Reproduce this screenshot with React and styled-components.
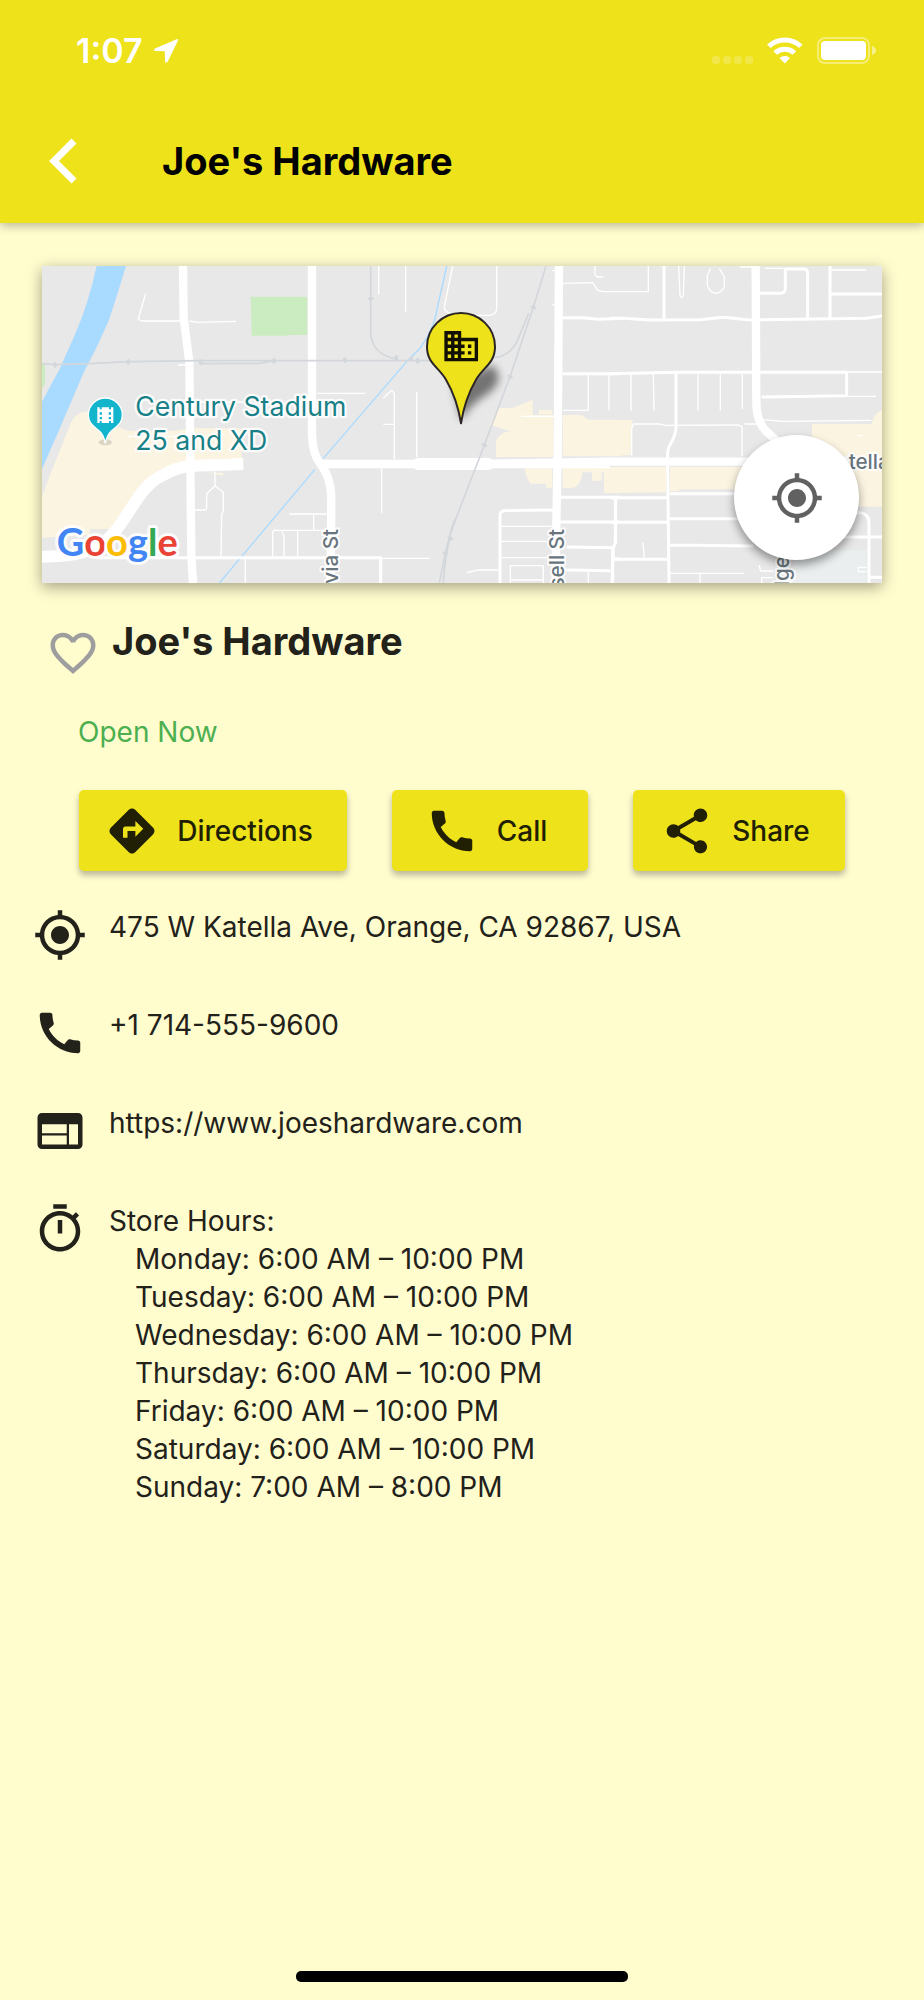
import React from "react";
import styled, { createGlobalStyle } from "styled-components";
import {
  MdCall,
  MdDirections,
  MdFavoriteBorder,
  MdGpsFixed,
  MdShare,
  MdWeb,
} from "react-icons/md";

const GlobalStyle = createGlobalStyle`
  * { box-sizing: border-box; }
  body {
    margin: 0;
    background: #fffcce;
    color: #22211a;
    font-family: Inter, "Liberation Sans", sans-serif;
    font-size: 28px;
    line-height: 38px;
  }
  h1, h2, p, ul { margin: 0; padding: 0; }
  button { font: inherit; color: inherit; cursor: pointer; }
`;

const Screen = styled.div`
  display: flex;
  flex-direction: column;
  min-height: 100vh;
`;

const Header = styled.header`
  position: relative;
  background: #eee21a;
  box-shadow: 0 2px 10px rgba(0, 0, 0, 0.3);
`;

const StatusBar = styled.div`
  display: flex;
  align-items: center;
  justify-content: space-between;
  height: 101px;
  padding: 0 48px 0 76px;
  color: #fff;
`;

const StatusGroup = styled.div`
  display: flex;
  align-items: center;
  gap: ${(p) => p.$gap}px;
`;

const Clock = styled.time`
  font-size: 34px;
  font-weight: 600;
`;

const TitleBar = styled.div`
  display: flex;
  align-items: center;
  gap: 60px;
  height: 122px;
  padding: 0 48px 2px;
`;

const IconButton = styled.button`
  display: flex;
  flex: none;
  padding: 0;
  border: 0;
  background: none;
  color: ${(p) => p.$color};
`;

const BarTitle = styled.h1`
  color: #000;
  font-size: 38px;
  font-weight: 700;
  line-height: 54px;
`;

const Main = styled.main`
  flex: 1;
  padding: 43px 42px 0;
`;

const MapCard = styled.section`
  position: relative;
  height: 317px;
  background: #e8e8e8;
  box-shadow: 0 4px 14px rgba(0, 0, 0, 0.36);
`;

const MapDrawing = styled.svg`
  display: block;
  width: 100%;
  height: 100%;
  font-family: Inter, "Liberation Sans", sans-serif;

  text {
    paint-order: stroke;
    stroke: rgba(255, 255, 255, 0.85);
    stroke-linejoin: round;
  }
`;

const LocateButton = styled.button`
  position: absolute;
  right: 23px;
  bottom: 23px;
  display: flex;
  align-items: center;
  justify-content: center;
  width: 125px;
  height: 125px;
  border: 0;
  border-radius: 50%;
  background: #fff;
  color: #616161;
  box-shadow: 0 5px 10px rgba(0, 0, 0, 0.4);
`;

const NameRow = styled.div`
  display: flex;
  align-items: flex-end;
  gap: 12px;
  height: 66px;
  margin-top: 31px;
  padding-left: 4px;
`;

const Name = styled.h2`
  align-self: flex-start;
  font-size: 38px;
  font-weight: 700;
  line-height: 54px;
`;

const OpenState = styled.p`
  margin-top: 33px;
  padding-left: 36px;
  color: #4caf50;
`;

const Actions = styled.div`
  display: flex;
  flex-wrap: wrap;
  gap: 45px;
  margin-top: 39px;
  padding-left: 37px;
`;

const ActionButton = styled.button`
  display: flex;
  align-items: center;
  justify-content: center;
  gap: 18px;
  min-width: ${(p) => p.$minWidth}px;
  height: 81px;
  padding: 0 8px 0 0;
  border: 0;
  border-radius: 5px;
  background: #eee21a;
  color: #211f04;
  font-weight: 500;
  box-shadow: 0 4px 6px rgba(0, 0, 0, 0.28);
`;

const InfoList = styled.ul`
  margin: 37px -9px 0;
  list-style: none;
`;

const InfoRow = styled.li`
  display: flex;
  align-items: flex-start;
  gap: 22px;
  min-height: 98px;

  svg { flex: none; }
`;

const InfoLink = styled.a`
  color: inherit;
  text-decoration: none;
`;

const Hours = styled.ul`
  padding-left: 26px;
  list-style: none;
`;

const HomeIndicator = styled.div`
  width: 36%;
  height: 11px;
  margin: 40px auto 18px;
  border-radius: 5px;
  background: #000;
`;

const hours = [
  ["Monday", "6:00 AM – 10:00 PM"],
  ["Tuesday", "6:00 AM – 10:00 PM"],
  ["Wednesday", "6:00 AM – 10:00 PM"],
  ["Thursday", "6:00 AM – 10:00 PM"],
  ["Friday", "6:00 AM – 10:00 PM"],
  ["Saturday", "6:00 AM – 10:00 PM"],
  ["Sunday", "7:00 AM – 8:00 PM"],
];

const actions = [
  { label: "Directions", Icon: MdDirections, minWidth: 268 },
  { label: "Call", Icon: MdCall, minWidth: 196 },
  { label: "Share", Icon: MdShare, minWidth: 212 },
];

function BackIcon() {
  return (
    <svg width="54" height="54" viewBox="0 0 54 54" aria-hidden="true">
      <path d="M26 7 6 27l20 20" fill="none" stroke="currentColor" strokeWidth="7" />
    </svg>
  );
}

function TimerIcon() {
  return (
    <svg width="54" height="54" viewBox="0 0 24 24" fill="currentColor" aria-hidden="true">
      <path d="M15 1H9v2h6V1zm-4 13h2V8h-2v6zm8.03-6.61l1.42-1.42c-.43-.51-.9-.99-1.41-1.41l-1.42 1.42C16.07 4.74 14.12 4 12 4c-4.97 0-9 4.03-9 9s4.02 9 9 9 9-4.03 9-9c0-2.12-.74-4.07-1.97-5.61zM12 20c-3.87 0-7-3.13-7-7s3.13-7 7-7 7 3.13 7 7-3.13 7-7 7z" />
    </svg>
  );
}

function LocationArrow() {
  return (
    <svg width="26" height="26" viewBox="0 0 26 26" aria-hidden="true">
      <path
        d="M23.6 1.2 2 10.4c-1.6.7-1.2 2.5.4 2.6l9.400.2.2 9.800c.1 1.800 2 2.100 2.800.5L24.900 2.800c.5-1.100-.2-2-1.300-1.600Z"
        fill="currentColor"
      />
    </svg>
  );
}

function StatusIcons() {
  return (
    <svg width="165" height="28" viewBox="0 0 165 28" fill="#fff" aria-hidden="true">
      <g opacity="0.2">
        {[0, 11, 22, 33].map((x) => (
          <rect key={x} x={x + 1} y="19" width="8" height="8" rx="3" />
        ))}
      </g>
      <path d="M56 7.500a26 26 0 0 1 35.600 0l-3.600 3.600a21 21 0 0 0-28.400 0z" />
      <path d="M62.300 14.200a17 17 0 0 1 23 0l-3.700 3.600a11.500 11.500 0 0 0-15.600 0z" />
      <path d="M68.500 21a8 8 0 0 1 10.600 0L73.800 26.500z" />
      <rect x="107" y="1" width="51" height="25" rx="7" fill="none" stroke="#fff" strokeWidth="2" opacity="0.4" />
      <rect x="110" y="4" width="45" height="19" rx="4" />
      <path d="M161 9q4 1.500 4 4.500t-4 4.500z" opacity="0.5" />
    </svg>
  );
}

const RailTicks = ({ points }) =>
  points.map(([x, y, a = 0]) => (
    <path key={`${x}-${y}`} transform={`translate(${x} ${y}) rotate(${a})`} d="M0-9V9M-3-6V6M3-6V6" strokeWidth="4" />
  ));

function StoreMap() {
  return (
    <MapDrawing viewBox="36 33 2520 951" preserveAspectRatio="xMidYMid slice" role="img" aria-label="Map around Joe's Hardware">
      <defs>
        <filter id="soft" x="-50%" y="-50%" width="200%" height="200%">
          <feGaussianBlur stdDeviation="12" />
        </filter>
      </defs>

      <g fill="#fbf4e1">
        <path d="M36 724 60 660 120 510Q135 470 170 470L290 527H430L500 520H635V612L490 615 400 640Q340 680 300 750 260 800 240 822H180V840L36 848zM535 653h44v9z" />
        <g transform="translate(870)">
          <path d="M510 510 535 460 580 458 638 434V606H528V560Q535 535 570 528zM638 480H700V606H638zM657 465h40v13h-40zM728 480h57l20 14h95v110H728zM615 640h82v58h-19v-12h-46q-17-20-17-46zM728 638H900V714H852V652h-7v25h-29v-25h-29q-5 46-32 47h-27z" />
        </g>
        <g transform="translate(1740)">
          <path d="M0 495H68L62 600 0 604zM0 636H168V712L0 714zM180 636H400V703H207v6h-27zM606 507H785Q790 475 816 465V755H700L606 640z" />
          <path d="M565 885H770V984H540z" fill="#eaeeef" />
        </g>
      </g>
      <path d="M662 125H832V240H775v2H665z" fill="#cbebc1" />
      <path d="M36 328h9v60l-9 12z" fill="#cbebc1" />

      <path d="M200 33H288Q262 120 235 200 200 280 160 355L85 530 36 642V440L90 340 130 250Q175 150 200 33z" fill="#a9daff" />
      <path d="M568 984 855 643M880 610 1130 320 1170 280Q1205 230 1215 190L1250 33" fill="none" stroke="#a9daff" strokeWidth="4" />

      <g fill="none" stroke="#fff" strokeWidth="4" strokeLinejoin="round">
        <path d="M347 115 325 192 335 198H450M478 198 500 202 618 199M444 330H470M555 650V692L530 716V760L525 765H495M555 692 580 712V765L575 780 573 904M778 777H890M851 777V825M728 903V830L732 826H895M755 826 762 845V903M803 826V903M646 912V984M860 415H1005M295 544H440M490 441H640" />
        <g transform="translate(870)">
          <path d="M176 33V118M257 33V170M398 33 373 155Q373 168 390 175M530 33V160Q530 181 505 181H430M190 430 215 406 223 415V612M190 508H223M290 412V606M185 640V774M182 910H330M440 953 475 945H535M728 85 818 83 832 105 848 110H985V33M825 33V60L832 66H850M805 360V465M730 466H805M867 360V466M604 484H705M544 814H695M544 859H680M544 908H680M571 984V932H670V984M571 975H670M805 950V984M697 47h8M697 150h8" />
        </g>
        <g transform="translate(1740)">
          <path d="M206 33 210 122Q215 132 220 122L223 33M302 40 292 60V90Q300 115 318 115 335 112 343 95V65L328 40M390 36H440M465 40H520M663 45H768M713 351H816M713 424H798M455 494 520 499 783 496M63 358V468M130 358 132 466M264 358V466M331 358V466M397 358V462M65 604V520L70 507H148L165 511 385 510 396 515V604M404 507H440M99 862 103 908M180 955H403M270 955V984M770 937H745V950H770M447 930 452 948H490M490 968H455V984M742 542H758" />
        </g>
      </g>

      <g fill="none" stroke="#fff" strokeWidth="9" strokeLinejoin="round">
        <path d="M200 908H1052V984" />
        <g transform="translate(870)">
          <path d="M728 188H790L835 193 910 190M728 356H900M722 727H900M720 801H900M887 732V860L880 880 876 984M740 876 880 878M738 945 872 947M880 912H900M540 984V775L550 767 700 765" />
        </g>
        <g transform="translate(1740)">
          <path d="M162 33V190M0 190H40L120 195 270 194 340 187 420 195 770 190 816 183M0 356 200 352H710V422L455 426M450 115H510Q526 115 526 100V42H580Q593 42 593 55V188M660 33V188M663 117H816M198 356V520Q195 545 180 570 173 580 173 600V640L177 984M0 728H172M180 716H380M0 802H172M180 791H390M16 732V865L8 880V984M10 913H172M180 870 430 873M700 846H816M720 773H745Q777 773 777 805V984M780 967H816" />
        </g>
      </g>

      <g fill="none" stroke="#fff" strokeWidth="25" strokeLinejoin="round">
        <path d="M459 33 461 190 478 320 481 620 484 900 489 984M846 33V540Q848 600 872 628 900 665 904 720L902 984" />
        <path d="M870 627H1740M1390 626 1740 620H2190L2556 616" />
        <path d="M1587 33 1583 600 1579 800 1577 984" />
        <path d="M2177 33 2179 440Q2179 500 2210 530L2270 585" />
        <path d="M1165 627H1375" strokeWidth="36" strokeLinecap="round" />
        <path d="M36 905C120 905 200 895 250 835 300 780 330 690 400 660Q440 635 490 632L580 629 640 627" strokeWidth="36" />
      </g>

      <g fill="none" stroke="#d3d7db" strokeWidth="5">
        <path d="M36 326 75 329 180 326 295 320 510 317H1200M510 326 690 325 732 317" />
        <RailTicks points={[[75, 329], [295, 320], [512, 322], [732, 317], [944, 316], [1144, 311], [1163, 317], [1099, 309]]} />
        <g transform="translate(870)">
          <path d="M152 33V240Q160 300 230 312M525 308Q575 300 595 250L626 175M678 33 640 157 570 365 493 570 410 785Q385 850 376 895L358 984M410 785Q390 820 390 850 375 900 370 984" />
          <RailTicks points={[[152, 131, 90], [640, 157, 110], [570, 365, 110], [493, 571, 110], [391, 850, 110], [376, 895, 100]]} />
        </g>
      </g>

      <g fill="#68757d" fontSize="62" fontWeight="500" strokeWidth="12">
        <text transform="translate(925 822) rotate(-90)" textAnchor="end">via St</text>
        <text transform="translate(1602 822) rotate(-90)" textAnchor="end">sell St</text>
        <text transform="translate(2277 903) rotate(-90)" textAnchor="end">lge</text>
        <text x="2456" y="643">tella</text>
      </g>

      <ellipse cx="226" cy="562" rx="20" ry="9" fill="#000" opacity="0.12" />
      <path
        d="M226 565Q221 540 208 528C190 512 175 505 175 480a51 51 0 0 1 102 0c0 25-15 32-33 48Q231 540 226 565z"
        fill="#12b5cb"
        stroke="#fff"
        strokeWidth="4"
      />
      <path d="M202 457h7v6h6v-6h22v6h6v-6h7v47h-7v-6h-6v6h-22v-6h-6v6h-7z" fill="#fff" />
      <path d="M209 472h7v7h-7zM209 486h7v7h-7zM236 472h7v7h-7zM236 486h7v7h-7z" fill="#12b5cb" />
      <g fill="#188087" fontSize="80" strokeWidth="14">
        <text x="316" y="482">Century Stadium</text>
        <text x="316" y="585">25 and XD</text>
      </g>

      <text x="80" y="904" fontFamily="Lato, sans-serif" fontSize="114" fontWeight="700" strokeWidth="18">
        <tspan fill="#4285f4">G</tspan>
        <tspan fill="#ea4335">o</tspan>
        <tspan fill="#fbbc05">o</tspan>
        <tspan fill="#4285f4">g</tspan>
        <tspan fill="#34a853">l</tspan>
        <tspan fill="#ea4335">e</tspan>
      </text>

      <g transform="translate(870)">
        <path d="M400 380 423 495Q450 450 490 425 540 395 535 360L520 330z" fill="#000" opacity="0.5" filter="url(#soft)" />
        <path
          d="M423 505C416 460 405 420 378 374 355 335 321 325 321 275a102 101 0 0 1 204 0c0 50-34 60-57 99C441 420 430 460 423 505z"
          fill="#eee21a"
          stroke="#2c2526"
          strokeWidth="6"
          strokeLinejoin="round"
        />
        <path
          transform="translate(363 213) scale(5.05)"
          d="M12 7V3H2v18h20V7H12zM6 19H4v-2h2v2zm0-4H4v-2h2v2zm0-4H4V9h2v2zm0-4H4V5h2v2zm4 12H8v-2h2v2zm0-4H8v-2h2v2zm0-4H8V9h2v2zm0-4H8V5h2v2zm10 12h-8v-2h2v-2h-2v-2h2v-2h-2V9h8v10zm-2-8h-2v2h2v-2zm0 4h-2v2h2v-2z"
          fill="#111002"
        />
      </g>
    </MapDrawing>
  );
}

export default function App() {
  return (
    <Screen>
      <GlobalStyle />
      <Header>
        <StatusBar>
          <StatusGroup $gap={10}>
            <Clock>1:07</Clock>
            <LocationArrow />
          </StatusGroup>
          <StatusIcons />
        </StatusBar>
        <TitleBar>
          <IconButton type="button" aria-label="Back" $color="#fff">
            <BackIcon />
          </IconButton>
          <BarTitle>Joe's Hardware</BarTitle>
        </TitleBar>
      </Header>

      <Main>
        <MapCard>
          <StoreMap />
          <LocateButton type="button" aria-label="Center map">
            <MdGpsFixed size={54} />
          </LocateButton>
        </MapCard>

        <NameRow>
          <IconButton type="button" aria-label="Add to favorites" $color="#9e9e9e">
            <MdFavoriteBorder size={54} />
          </IconButton>
          <Name>Joe's Hardware</Name>
        </NameRow>
        <OpenState>Open Now</OpenState>

        <Actions>
          {actions.map(({ label, Icon, minWidth }) => (
            <ActionButton key={label} type="button" $minWidth={minWidth}>
              <Icon size={54} />
              {label}
            </ActionButton>
          ))}
        </Actions>

        <InfoList>
          <InfoRow>
            <MdGpsFixed size={54} />
            <p>475 W Katella Ave, Orange, CA 92867, USA</p>
          </InfoRow>
          <InfoRow>
            <MdCall size={54} />
            <InfoLink href="tel:+17145559600">+1 714-555-9600</InfoLink>
          </InfoRow>
          <InfoRow>
            <MdWeb size={54} />
            <InfoLink href="https://www.joeshardware.com">https://www.joeshardware.com</InfoLink>
          </InfoRow>
          <InfoRow>
            <TimerIcon />
            <div>
              <p>Store Hours:</p>
              <Hours>
                {hours.map(([day, time]) => (
                  <li key={day}>
                    {day}: {time}
                  </li>
                ))}
              </Hours>
            </div>
          </InfoRow>
        </InfoList>
      </Main>

      <HomeIndicator />
    </Screen>
  );
}
